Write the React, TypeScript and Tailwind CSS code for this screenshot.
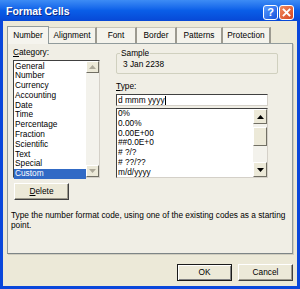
import React from 'react'

const categories = [
  'General',
  'Number',
  'Currency',
  'Accounting',
  'Date',
  'Time',
  'Percentage',
  'Fraction',
  'Scientific',
  'Text',
  'Special',
  'Custom',
]

const formats = ['0%', '0.00%', '0.00E+00', '##0.0E+0', '# ?/?', '# ??/??', 'm/d/yyyy']

const tabs = ['Number', 'Alignment', 'Font', 'Border', 'Patterns', 'Protection']
const tabWidths = ['w-[42px]', 'w-[48px]', 'w-[40px]', 'w-[40px]', 'w-[46px]', 'w-[48px]']

function Arrow({ up, dim }: { up?: boolean; dim?: boolean }) {
  return (
    <svg width="7" height="4" viewBox="0 0 7 4" className="block">
      <polygon
        points={up ? '0,4 7,4 3.5,0' : '0,0 7,0 3.5,4'}
        fill={dim ? '#aca899' : '#000'}
      />
    </svg>
  )
}

function ScrollButton({ up, dim, tall }: { up?: boolean; dim?: boolean; tall?: boolean }) {
  return (
    <div
      className={`${tall ? 'h-[15px]' : 'h-[12px]'} w-full flex items-center justify-center bg-[#ece9d8] border border-t-white border-l-white border-r-[#716f64] border-b-[#716f64] shrink-0`}
    >
      <Arrow up={up} dim={dim} />
    </div>
  )
}

function Button({ children, isDefault, className }: { children: React.ReactNode; isDefault?: boolean; className?: string }) {
  return (
    <div
      className={`h-[17px] w-[55px] flex items-center justify-center bg-[#ece9d8] text-[8.3px] text-black ${
        isDefault
          ? 'border border-[#1a1a1a] shadow-[inset_1px_1px_0_#fff,inset_-1px_-1px_0_#808080]'
          : 'border border-t-white border-l-white border-r-[#404040] border-b-[#404040] shadow-[inset_-1px_-1px_0_#9d9a8c]'
      } ${className ?? ''}`}
    >
      {children}
    </div>
  )
}

export default function App() {
  return (
    <div className="w-[300px] h-[289px] flex flex-col bg-[#0a47db] font-['Liberation_Sans',Arial,sans-serif] overflow-hidden select-none">
      {/* Title bar */}
      <div className="h-[21px] shrink-0 flex items-center justify-between pl-[6px] pr-[6px] bg-gradient-to-b from-[#3d8cf5] via-[#0a5ee8] to-[#0848d6]">
        <span className="text-[10.5px] font-bold text-white leading-none mt-[2px] [text-shadow:1px_1px_0_#0a2a8a]">
          Format Cells
        </span>
        <div className="flex items-center gap-[1px] mt-[3px]">
          <div className="w-[15px] h-[15px] rounded-[3px] border border-white bg-gradient-to-br from-[#5a9cff] to-[#1650dc] flex items-center justify-center">
            <span className="text-white text-[11px] font-bold leading-none">?</span>
          </div>
          <div className="w-[15px] h-[15px] rounded-[3px] border border-white bg-gradient-to-br from-[#f08a5e] to-[#d5411c] flex items-center justify-center">
            <svg width="9" height="9" viewBox="0 0 9 9">
              <path d="M1.5 1.5 L7.5 7.5 M7.5 1.5 L1.5 7.5" stroke="#fff" strokeWidth="1.8" strokeLinecap="square" />
            </svg>
          </div>
        </div>
      </div>

      {/* Body */}
      <div className="flex-1 mx-[3px] mb-[3px] bg-[#ece9d8] flex flex-col">
        {/* Tabs */}
        <div className="pt-[4px] pl-[4px] h-[22px] flex items-end shrink-0">
          {tabs.map((t, i) => (
            <div
              key={t}
              className={`${tabWidths[i]} flex items-center justify-center text-[8.3px] text-black ${
                i === 0
                  ? 'h-[18px] bg-[#f5f4ee] border border-b-0 border-[#919b9c] -mb-[1px] z-10'
                  : 'h-[16px] bg-[#f4f3ec] border-t border-t-[#c8c5b8] border-r-2 border-r-[#9c9a90]'
              }`}
            >
              {t}
            </div>
          ))}
        </div>

        {/* Panel */}
        <div className="mx-[4px] h-[211px] border border-[#919b9c] border-b-[#7d8586] shadow-[1px_1px_0_#d0cdbf] bg-[#f0eee5] flex flex-col shrink-0">
          <div className="flex">
            {/* Left column */}
            <div className="ml-[5px] w-[87px] flex flex-col">
              <div className="mt-[3px] h-[10px] text-[8.3px] leading-[10px] text-black">
                <span className="underline">C</span>ategory:
              </div>
              <div className="mt-[3px] h-[118px] border border-[#404040] border-r-[#d4d0c8] border-b-[#d4d0c8] bg-white flex">
                <div className="flex-1 flex flex-col pt-[0.5px]">
                  {categories.map((c) => (
                    <div
                      key={c}
                      className={`h-[9.8px] leading-[9.8px] text-[8.3px] pl-[1px] whitespace-nowrap ${
                        c === 'Custom' ? 'bg-[#316ac5] text-white' : 'text-black'
                      }`}
                    >
                      {c}
                    </div>
                  ))}
                </div>
                <div className="w-[13px] flex flex-col justify-between bg-[#f3f2ec]">
                  <ScrollButton up dim />
                  <ScrollButton dim />
                </div>
              </div>
              <Button className="mt-[5px] ml-[1px]">
                <span>
                  <span className="underline">D</span>elete
                </span>
              </Button>
            </div>

            {/* Right column */}
            <div className="ml-[16px] flex flex-col">
              <div className="relative mt-[9px] w-[162px] h-[21px] border border-[#d0d0bf] rounded-[2px] flex items-center pl-[6px] pt-[2px]">
                <span className="absolute -top-[6px] left-[3px] px-[1px] bg-[#f0eee5] text-[8.3px] leading-[10px] text-black">
                  Sample
                </span>
                <span className="text-[8.3px] text-black">3 Jan 2238</span>
              </div>
              <div className="mt-[7px] h-[10px] text-[8.3px] leading-[10px] text-black">
                <span className="underline">T</span>ype:
              </div>
              <div className="mt-[3px] w-[152px] h-[12px] border border-[#404040] border-r-[#d4d0c8] border-b-[#d4d0c8] bg-white flex items-center pl-[1px]">
                <span className="text-[8.3px] leading-none text-black">d mmm yyyy</span>
                <span className="w-[1px] h-[9px] bg-black" />
              </div>
              <div className="mt-[2px] w-[152px] h-[70px] border border-[#404040] border-r-[#d4d0c8] border-b-[#d4d0c8] bg-white flex">
                <div className="flex-1 flex flex-col">
                  {formats.map((f) => (
                    <div key={f} className="h-[9.8px] leading-[9.8px] text-[8.3px] pl-[1px] text-black whitespace-nowrap">
                      {f}
                    </div>
                  ))}
                </div>
                <div className="w-[14px] flex flex-col bg-[#f3f2ec]">
                  <ScrollButton up tall />
                  <div className="mt-[3px] h-[19px] bg-[#ece9d8] border border-t-white border-l-white border-r-[#716f64] border-b-[#716f64]" />
                  <div className="flex-1" />
                  <ScrollButton tall />
                </div>
              </div>
            </div>
          </div>

          <div className="mt-[10px] pl-[3px] text-[8.3px] leading-[10px] text-black whitespace-nowrap">
            Type the number format code, using one of the existing codes as a starting
            <br />
            point.
          </div>
        </div>

        {/* Bottom buttons */}
        <div className="mt-[10px] mr-[4px] flex justify-end gap-[6px]">
          <Button isDefault>OK</Button>
          <Button>Cancel</Button>
        </div>
      </div>
    </div>
  )
}
